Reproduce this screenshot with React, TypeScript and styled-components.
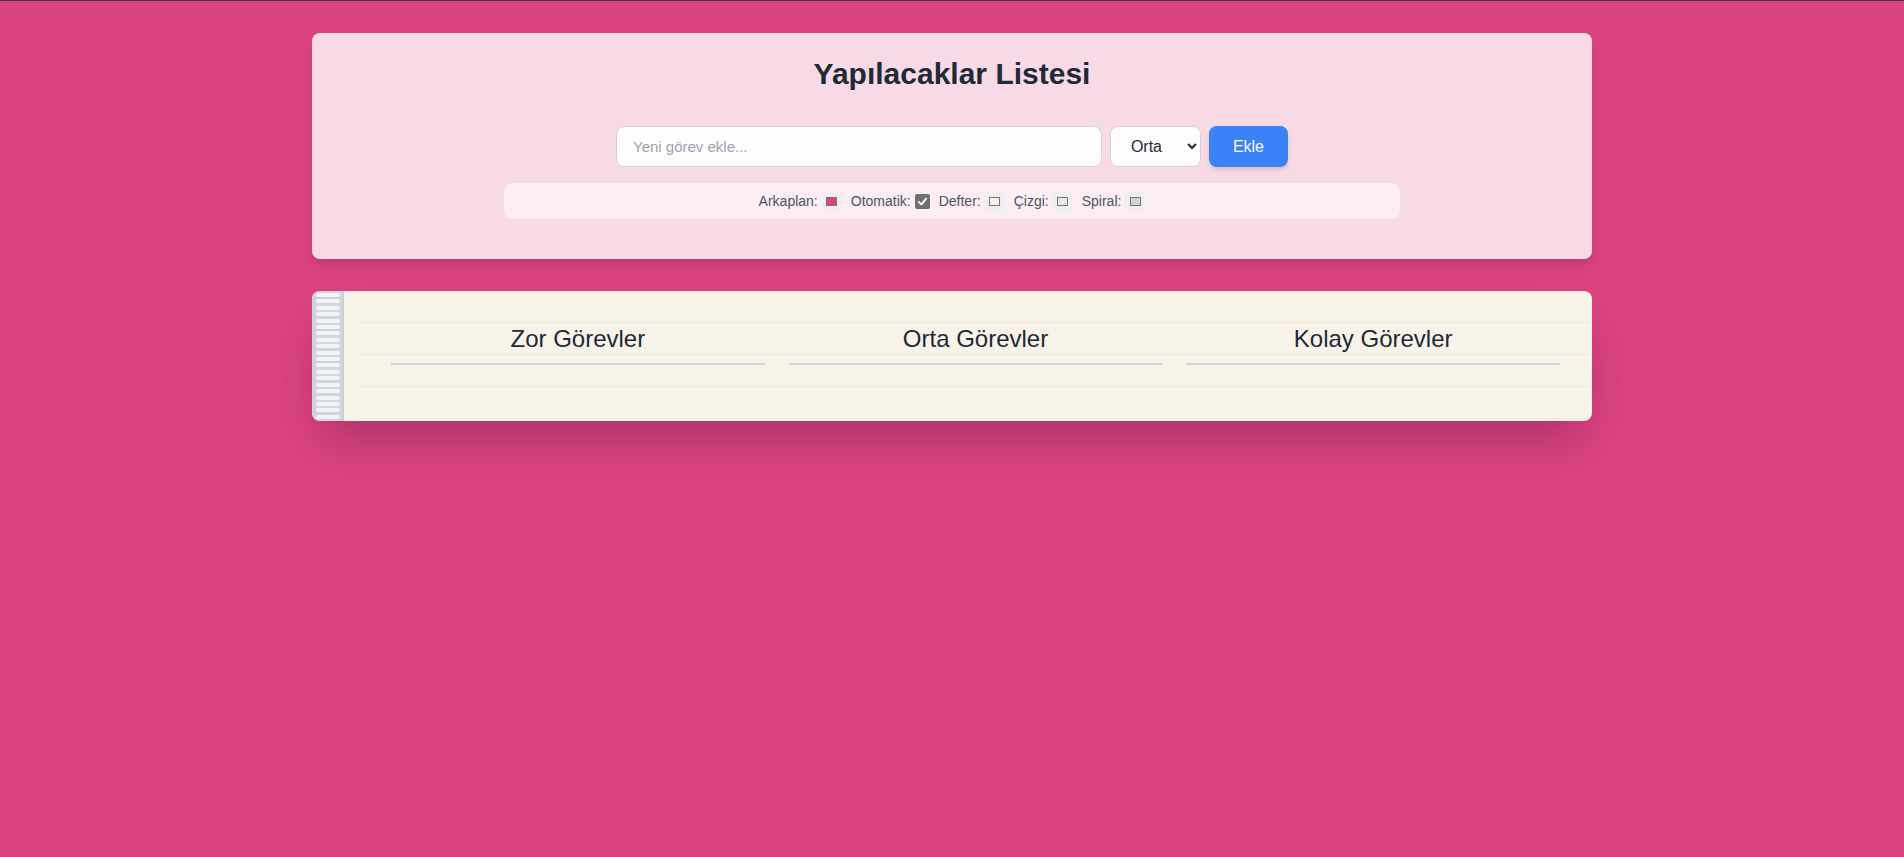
import React, { useState } from "react";
import styled, { createGlobalStyle } from "styled-components";

const GlobalStyle = createGlobalStyle`
  * { box-sizing: border-box; }
  html { background: #db4280; }
  body {
    margin: 0;
    min-height: 100vh;
    background: #db4280;
    border-top: 1px solid #3a3a3a;
    font-family: "Liberation Sans", Arial, sans-serif;
    color: #1f2937;
  }
`;

const Page = styled.div`
  max-width: 1280px;
  margin: 0 auto;
  padding: 32px 0;
`;

const ControlCard = styled.section`
  background: rgba(255, 255, 255, 0.8);
  border-radius: 8px;
  padding: 23px 24px 40px;
  margin-bottom: 32px;
  box-shadow: 0 10px 15px -3px rgba(0, 0, 0, 0.1), 0 4px 6px -4px rgba(0, 0, 0, 0.1);
`;

const Title = styled.h1`
  margin: 0 0 34px;
  font-size: 30px;
  line-height: 36px;
  font-weight: 700;
  text-align: center;
  color: #1f2937;
`;

const AddRow = styled.form`
  display: flex;
  gap: 8px;
  max-width: 672px;
  margin: 0 auto 16px;
`;

const TaskInput = styled.input`
  flex: 1;
  min-width: 0;
  height: 41px;
  padding: 8px 16px;
  border: 1px solid #d1d5db;
  border-radius: 8px;
  background: rgba(255, 255, 255, 0.9);
  font-family: "Liberation Sans", Arial, sans-serif;
  font-size: 15px;
  color: #1f2937;
  outline: none;
  &::placeholder { color: #9ca3af; }
`;

const PrioritySelect = styled.select`
  height: 41px;
  padding: 8px 12px 8px 16px;
  border: 1px solid #d1d5db;
  border-radius: 8px;
  background: rgba(255, 255, 255, 0.9);
  font-family: "Liberation Sans", Arial, sans-serif;
  font-size: 16px;
  color: #1f2937;
`;

const AddButton = styled.button`
  height: 41px;
  padding: 8px 24px;
  border: none;
  border-radius: 8px;
  background: #3b82f6;
  color: #ffffff;
  font-family: "Liberation Sans", Arial, sans-serif;
  font-size: 16px;
  box-shadow: 0 4px 6px -1px rgba(0, 0, 0, 0.1), 0 2px 4px -2px rgba(0, 0, 0, 0.1);
  cursor: pointer;
`;

const Legend = styled.div`
  max-width: 896px;
  margin: 0 auto;
  padding: 8px;
  border-radius: 8px;
  background: rgba(255, 255, 255, 0.5);
  display: flex;
  justify-content: center;
  align-items: center;
  gap: 9px;
  font-size: 14px;
  line-height: 20px;
  color: #4b5563;
`;

const LegendItem = styled.label`
  display: flex;
  align-items: center;
  gap: 4px;
`;

const Swatch = styled.span`
  width: 20px;
  height: 20px;
  border-radius: 4px;
  background: #efefef;
  display: flex;
  align-items: center;
  justify-content: center;
`;

const SwatchColor = styled.span<{ $color: string }>`
  width: 11px;
  height: 9px;
  border: 1px solid #767676;
  background: ${(p) => p.$color};
`;

const CheckBox = styled.span`
  width: 15px;
  height: 15px;
  border-radius: 2px;
  background: #707070;
  display: flex;
  align-items: center;
  justify-content: center;
`;

const Notebook = styled.section`
  display: flex;
  background: #f7f3e8;
  border-radius: 8px;
  overflow: hidden;
  box-shadow: 0 25px 50px -12px rgba(0, 0, 0, 0.25);
`;

const Spiral = styled.div`
  width: 32px;
  flex-shrink: 0;
  background: #d1d5db;
  border-right: 1px solid #c9cdd3;
  padding: 2px 0;
  display: flex;
  flex-direction: column;
  justify-content: space-between;
  align-items: center;
`;

const Ring = styled.span`
  width: 24px;
  height: 4px;
  border-radius: 2px;
  background: #f3f4f6;
`;

const Paper = styled.div`
  flex: 1;
  margin-left: 15px;
  padding: 32px 32px 0;
  background-image: repeating-linear-gradient(
    to bottom,
    transparent 0,
    transparent 31px,
    #efeadd 31px,
    #efeadd 32px
  );
  display: grid;
  grid-template-columns: repeat(3, 1fr);
  gap: 24px;
`;

const Column = styled.div`
  display: flex;
  flex-direction: column;
`;

const ColumnTitle = styled.h2`
  margin: 0;
  padding-bottom: 8px;
  border-bottom: 2px solid #d1d5db;
  font-size: 24px;
  line-height: 32px;
  font-weight: 400;
  text-align: center;
  color: #1f2937;
`;

const TaskList = styled.ul`
  list-style: none;
  margin: 16px 0 0;
  padding: 0 0 32px;
  min-height: 40px;
`;

const legendItems = [
  { label: "Arkaplan:", color: "#db4280" },
  { label: "Otomatik:", check: true },
  { label: "Defter:", color: "#f7f3e8" },
  { label: "Çizgi:", color: "#e5e7eb" },
  { label: "Spiral:", color: "#d1d5db" },
];

const columns = ["Zor Görevler", "Orta Görevler", "Kolay Görevler"];

export default function App() {
  const [text, setText] = useState("");
  const [priority, setPriority] = useState("orta");

  return (
    <>
      <GlobalStyle />
      <Page>
        <ControlCard>
          <Title>Yapılacaklar Listesi</Title>
          <AddRow onSubmit={(e) => e.preventDefault()}>
            <TaskInput
              placeholder="Yeni görev ekle..."
              value={text}
              onChange={(e) => setText(e.target.value)}
            />
            <PrioritySelect value={priority} onChange={(e) => setPriority(e.target.value)}>
              <option value="zor">Zor</option>
              <option value="orta">Orta</option>
              <option value="kolay">Kolay</option>
            </PrioritySelect>
            <AddButton type="submit">Ekle</AddButton>
          </AddRow>
          <Legend>
            {legendItems.map((item) => (
              <LegendItem key={item.label}>
                {item.label}
                {item.check ? (
                  <CheckBox>
                    <svg width="11" height="11" viewBox="0 0 12 12">
                      <path d="M2 6.5 L4.8 9.2 L10 2.8" fill="none" stroke="#fff" strokeWidth="2" strokeLinecap="round" strokeLinejoin="round" />
                    </svg>
                  </CheckBox>
                ) : (
                  <Swatch>
                    <SwatchColor $color={item.color as string} />
                  </Swatch>
                )}
              </LegendItem>
            ))}
          </Legend>
        </ControlCard>

        <Notebook>
          <Spiral>
            {Array.from({ length: 20 }).map((_, i) => (
              <Ring key={i} />
            ))}
          </Spiral>
          <Paper>
            {columns.map((c) => (
              <Column key={c}>
                <ColumnTitle>{c}</ColumnTitle>
                <TaskList />
              </Column>
            ))}
          </Paper>
        </Notebook>
      </Page>
    </>
  );
}
